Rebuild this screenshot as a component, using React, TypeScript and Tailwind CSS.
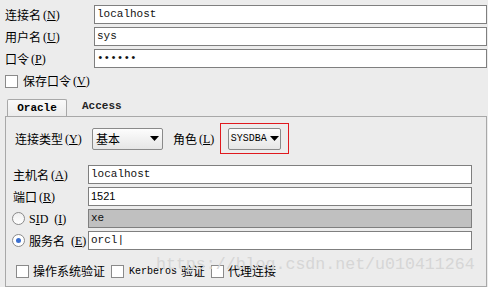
import React from "react";

const cjk = "font-['Noto_Sans_CJK_SC','Noto_Sans',sans-serif]";
const mono = "font-['Liberation_Mono',monospace]";

const Key = ({ k }: { k: string }) => (
  <span className="font-['Liberation_Serif',serif] text-[12px] ml-[2px]">
    (<span className="underline">{k}</span>)
  </span>
);

const Label = ({ text, k, w }: { text: string; k: string; w: string }) => (
  <div className={`${w} shrink-0 flex items-center text-[12px] text-black ${cjk}`}>
    <span>{text}</span>
    <Key k={k} />
  </div>
);

const Field = ({ value, gray }: { value?: string; gray?: boolean }) => (
  <div
    className={`flex-1 h-[19px] border border-[#7f7f7f] flex items-center px-[2px] text-[11px] text-[#111] ${mono} ${
      gray ? "bg-[#c0c0c0]" : "bg-white"
    }`}
  >
    {value}
  </div>
);

const Box = () => (
  <div className="w-[13px] h-[13px] border border-[#8a8a8a] bg-white shrink-0" />
);

const Caret = () => (
  <svg width="9" height="5" viewBox="0 0 9 5">
    <path d="M0 0h9L4.5 5z" fill="#000" />
  </svg>
);

export default function App() {
  return (
    <div className={`relative w-[488px] h-[287px] bg-[#ececec] overflow-hidden ${cjk}`}>
      <div className="pt-[5px] pl-[5px] pr-[1px] flex flex-col gap-[3px]">
        <div className="flex items-center">
          <Label text="连接名" k="N" w="w-[89px]" />
          <Field value="localhost" />
        </div>
        <div className="flex items-center">
          <Label text="用户名" k="U" w="w-[89px]" />
          <Field value="sys" />
        </div>
        <div className="flex items-center">
          <Label text="口令" k="P" w="w-[89px]" />
          <Field value="••••••" />
        </div>
        <div className="flex items-center gap-[5px] mt-[3px] h-[14px]">
          <Box />
          <div className="flex items-center text-[12px]">
            <span>保存口令</span>
            <Key k="V" />
          </div>
        </div>
      </div>

      <div className="mt-[11px] ml-[5px] mr-[1px]">
        <div className="flex items-end h-[17px] pl-[2px]">
          <div
            className={`w-[60px] h-[17px] border border-b-0 border-[#a8a8a8] rounded-t-[2px] bg-gradient-to-b from-[#fafafa] to-[#ececec] flex items-center justify-center text-[11px] font-bold ${mono}`}
          >
            Oracle
          </div>
          <div className={`ml-[15px] mb-[2px] text-[11px] font-bold text-[#222] ${mono}`}>Access</div>
        </div>
        <div className="h-[171px] border border-[#a8a8a8] pt-[6px] pr-[14px]">
          <div className="flex items-center h-[31px]">
            <Label text="连接类型" k="Y" w="w-[86px] pl-[9px]" />
            <div className="w-[71px] h-[22px] border border-[#8a8a8a] rounded-[2px] bg-gradient-to-b from-[#fdfdfd] to-[#e6e6e6] flex items-center justify-between px-[3px] text-[12px]">
              <span>基本</span>
              <Caret />
            </div>
            <div className="ml-[10px] flex items-center text-[12px]">
              <span>角色</span>
              <Key k="L" />
            </div>
            <div className="ml-[6px] w-[69px] h-[31px] border border-[#e0191e] flex items-center justify-center">
              <div
                className={`w-[53px] h-[22px] border border-[#8a8a8a] rounded-[2px] bg-gradient-to-b from-[#fdfdfd] to-[#e6e6e6] flex items-center justify-center gap-[3px] text-[10px] ${mono}`}
              >
                <span>SYSDBA</span>
                <Caret />
              </div>
            </div>
          </div>

          <div className="mt-[11px] flex flex-col gap-[3px]">
            <div className="flex items-center">
              <Label text="主机名" k="A" w="w-[82px] pl-[7px]" />
              <Field value="localhost" />
            </div>
            <div className="flex items-center">
              <Label text="端口" k="R" w="w-[82px] pl-[7px]" />
              <div className="flex-1 h-[19px] border border-[#7f7f7f] bg-white flex items-center px-[2px] text-[11px] font-['Liberation_Sans',sans-serif]">
                1521
              </div>
            </div>
            <div className="flex items-center">
              <div className="w-[82px] pl-[6px] shrink-0 flex items-center gap-[4px]">
                <div className="w-[13px] h-[13px] rounded-full border border-[#8a8a8a] bg-gradient-to-b from-[#f0f0f0] to-white" />
                <span className="font-['Liberation_Serif',serif] text-[12px]">
                  S<span className="underline">I</span>D
                </span>
                <Key k="I" />
              </div>
              <Field value="xe" gray />
            </div>
            <div className="flex items-center">
              <div className="w-[82px] pl-[6px] shrink-0 flex items-center gap-[4px] text-[12px]">
                <div className="w-[13px] h-[13px] rounded-full border border-[#8a8a8a] bg-white flex items-center justify-center">
                  <div className="w-[5px] h-[5px] rounded-full bg-[#3a6fd0]" />
                </div>
                <span>服务名</span>
                <Key k="E" />
              </div>
              <Field value="orcl|" />
            </div>
          </div>

          <div className="mt-[12px] pl-[10px] flex items-center text-[12px]">
            <Box />
            <span className="ml-[4px]">操作系统验证</span>
            <div className="ml-[6px]"><Box /></div>
            <span className={`ml-[5px] text-[10px] ${mono}`}>Kerberos</span>
            <span className="ml-[4px]">验证</span>
            <div className="ml-[6px]"><Box /></div>
            <span className="ml-[4px]">代理连接</span>
          </div>
        </div>
      </div>

      <div className="absolute left-[156px] top-[253px] text-[16.6px] text-[#d6d6d6] font-['Liberation_Mono',monospace] pointer-events-none whitespace-nowrap">
        https://blog.csdn.net/u010411264
      </div>
    </div>
  );
}
